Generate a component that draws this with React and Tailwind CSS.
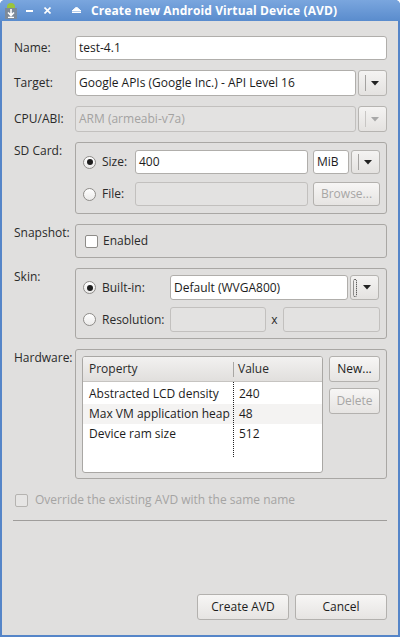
import React from 'react';

const font = { fontFamily: '"Open Sans", "DejaVu Sans", sans-serif' };

const Arrow = ({ disabled }) => (
  <svg width="8" height="5" viewBox="0 0 8 5">
    <path d="M0 0 H8 L4 4.5 Z" fill={disabled ? '#a8a8a8' : '#222'} />
  </svg>
);

const DropButton = ({ disabled, dotted }) => (
  <div className="w-[29px] h-full flex items-center rounded-[3px] border border-[#b6b4b1] bg-gradient-to-b from-[#f4f3f2] to-[#e4e2e0]">
    {dotted ? (
      <div className="ml-[2px] w-[4px] h-[18px] border border-dotted border-[#333] rounded-[2px]" />
    ) : (
      <div className={`ml-[6px] w-px h-[16px] ${disabled ? 'bg-[#c8c6c4]' : 'bg-[#a4a2a0]'}`} />
    )}
    <div className="flex-1 flex justify-center pr-[2px]">
      <Arrow disabled={disabled} />
    </div>
  </div>
);

const Field = ({ children, disabled, className = '' }) => (
  <div
    className={`h-full shrink-0 flex items-center px-[3px] rounded-[3px] border ${
      disabled ? 'bg-[#e3e2e1] border-[#c2c0be] text-[#a3a2a1]' : 'bg-white border-[#b0aeab] text-[#1c1c1c]'
    } ${className}`}
  >
    {children}
  </div>
);

const Radio = ({ checked }) => (
  <div className="w-[13px] h-[13px] shrink-0 rounded-full border border-[#8e8c89] bg-gradient-to-b from-white to-[#ebeae9] flex items-center justify-center">
    {checked && <div className="w-[6px] h-[6px] rounded-full bg-[#1e1e1e]" />}
  </div>
);

const Check = ({ disabled }) => (
  <div className={`w-[13px] h-[13px] shrink-0 rounded-[2px] border ${disabled ? 'border-[#b5b3b0] bg-[#e6e5e4]' : 'border-[#8e8c89] bg-white'}`} />
);

const Button = ({ children, disabled, className = '' }) => (
  <div
    className={`flex items-center justify-center rounded-[3px] border border-[#b3b1ae] bg-gradient-to-b from-[#f7f6f5] to-[#e6e4e2] ${
      disabled ? 'text-[#a7a6a5]' : 'text-[#1c1c1c]'
    } ${className}`}
  >
    {children}
  </div>
);

const Label = ({ children, className = '' }) => (
  <div className={`w-[73px] shrink-0 pl-[12px] whitespace-nowrap text-[#2a2a2a] ${className}`}>{children}</div>
);

const Group = ({ label, children, className = '' }) => (
  <div className="flex">
    <Label>{label}</Label>
    <div className={`w-[312px] shrink-0 rounded-[3px] border border-[#a9a7a4] ${className}`}>{children}</div>
  </div>
);

export default function App() {
  return (
    <div className="w-[400px] h-[637px] bg-[#5585c8] rounded-t-[5px] flex flex-col text-[12px]" style={font}>
      {/* title bar */}
      <div className="h-[21px] rounded-t-[5px] bg-gradient-to-b from-[#7aa6de] to-[#5a8ccd] flex items-center text-white">
        <div className="ml-[5px] w-[12px] h-[17px] flex flex-col">
          <div className="h-[6px] flex justify-center">
            <div className="w-[8px] h-[5px] mt-[1px] rounded-t-[4px] bg-[#9ac43b]" />
          </div>
          <div className="h-[11px] bg-[#7d8a99] flex items-center justify-center">
            <svg width="8" height="9" viewBox="0 0 8 9">
              <path d="M4 0 V6 M1 3.5 L4 6.5 L7 3.5 M1 8.5 H7" stroke="#fff" strokeWidth="1.6" fill="none" />
            </svg>
          </div>
        </div>
        <div className="ml-[9px] w-[7px] h-[2px] bg-white" />
        <svg className="ml-[11px]" width="7" height="7" viewBox="0 0 7 7">
          <path d="M0.5 0.5 L6.5 6.5 M6.5 0.5 L0.5 6.5" stroke="#fff" strokeWidth="1.6" />
        </svg>
        <svg className="ml-[21px]" width="9" height="7" viewBox="0 0 9 7">
          <path d="M4.5 0 L9 4 H0 Z M0 5.5 H9" stroke="#fff" strokeWidth="1" fill="#fff" />
        </svg>
        <span className="ml-[10px] font-bold text-[12px] tracking-[0.1px]">Create new Android Virtual Device (AVD)</span>
      </div>

      {/* body */}
      <div className="flex-1 mx-[2px] mb-[2px] bg-[#e0dfde] flex flex-col">
        <div className="flex items-center mt-[15px] h-[24px]">
          <Label>Name:</Label>
          <Field className="w-[312px]">test-4.1</Field>
        </div>

        <div className="flex items-center mt-[10px] h-[26px]">
          <Label>Target:</Label>
          <Field className="w-[281px]">Google APIs (Google Inc.) - API Level 16</Field>
          <div className="ml-[2px] h-full">
            <DropButton />
          </div>
        </div>

        <div className="flex items-center mt-[10px] h-[26px]">
          <Label>CPU/ABI:</Label>
          <Field disabled className="w-[281px]">ARM (armeabi-v7a)</Field>
          <div className="ml-[2px] h-full">
            <DropButton disabled />
          </div>
        </div>

        <div className="mt-[10px]">
          <Group label="SD Card:" className="px-[6px] py-[7px] flex flex-col gap-[8px]">
            <div className="flex items-center h-[24px]">
              <div className="w-[53px] flex items-center gap-[6px] pl-[1px]">
                <Radio checked />
                <span className="text-[#2a2a2a]">Size:</span>
              </div>
              <Field className="w-[173px]">400</Field>
              <Field className="ml-[5px] w-[36px]">MiB</Field>
              <div className="ml-[2px] h-[24px]">
                <DropButton />
              </div>
            </div>
            <div className="flex items-center h-[24px]">
              <div className="w-[53px] flex items-center gap-[6px] pl-[1px]">
                <Radio />
                <span className="text-[#2a2a2a]">File:</span>
              </div>
              <Field disabled className="w-[173px]" />
              <Button disabled className="ml-[5px] w-[67px] h-full">Browse...</Button>
            </div>
          </Group>
        </div>

        <div className="mt-[10px]">
          <Group label="Snapshot:" className="h-[34px] flex items-center pl-[9px] gap-[5px]">
            <Check />
            <span className="text-[#2a2a2a]">Enabled</span>
          </Group>
        </div>

        <div className="mt-[10px]">
          <Group label="Skin:" className="px-[6px] py-[6px] flex flex-col gap-[7px]">
            <div className="flex items-center h-[25px]">
              <div className="w-[88px] flex items-center gap-[6px] pl-[1px]">
                <Radio checked />
                <span className="text-[#2a2a2a]">Built-in:</span>
              </div>
              <Field className="w-[178px]">Default (WVGA800)</Field>
              <div className="ml-[2px] h-full">
                <DropButton dotted />
              </div>
            </div>
            <div className="flex items-center h-[25px]">
              <div className="w-[88px] flex items-center gap-[6px] pl-[1px]">
                <Radio />
                <span className="text-[#2a2a2a]">Resolution:</span>
              </div>
              <Field disabled className="w-[96px]" />
              <span className="w-[17px] text-center text-[#2a2a2a]">x</span>
              <Field disabled className="w-[97px]" />
            </div>
          </Group>
        </div>

        <div className="mt-[10px]">
          <Group label="Hardware:" className="h-[130px] flex px-[6px] py-[6px]">
            <div className="w-[241px] h-[117px] rounded-[3px] border border-[#a9a7a4] bg-white flex flex-col overflow-hidden">
              <div className="h-[25px] shrink-0 flex items-center bg-gradient-to-b from-[#f2f1f0] to-[#e1dfdd] border-b border-[#c6c4c1] text-[#2a2a2a]">
                <div className="w-[151px] pl-[6px] border-r border-[#a9a7a4] h-[15px] flex items-center">Property</div>
                <div className="pl-[4px]">Value</div>
              </div>
              <div className="relative flex-1">
                {[
                  ['Abstracted LCD density', '240', 'bg-white'],
                  ['Max VM application heap size', '48', 'bg-[#f4f3f2]'],
                  ['Device ram size', '512', 'bg-white'],
                ].map(([p, v, bg]) => (
                  <div key={p} className={`h-[20px] first:mt-[2px] flex items-center text-[#1c1c1c] ${bg}`}>
                    <div className="w-[150px] shrink-0 pl-[6px] whitespace-nowrap overflow-hidden">{p}</div>
                    <div className="pl-[6px]">{v}</div>
                  </div>
                ))}
                <div className="absolute left-[150px] top-0 h-[75px] border-l border-dotted border-[#222]" />
              </div>
            </div>
            <div className="ml-[6px] flex flex-col gap-[6px]">
              <Button className="w-[51px] h-[26px]">New...</Button>
              <Button disabled className="w-[51px] h-[26px]">Delete</Button>
            </div>
          </Group>
        </div>

        <div className="mt-[12px] ml-[13px] flex items-center gap-[7px] text-[#a5a4a3]">
          <Check disabled />
          <span>Override the existing AVD with the same name</span>
        </div>

        <div className="mt-[11px] mx-[11px] h-px bg-[#9f9d9b]" />

        <div className="flex-1" />

        <div className="flex justify-end gap-[6px] mr-[11px] mb-[15px]">
          <Button className="w-[92px] h-[26px]">Create AVD</Button>
          <Button className="w-[92px] h-[26px]">Cancel</Button>
        </div>
      </div>
    </div>
  );
}
